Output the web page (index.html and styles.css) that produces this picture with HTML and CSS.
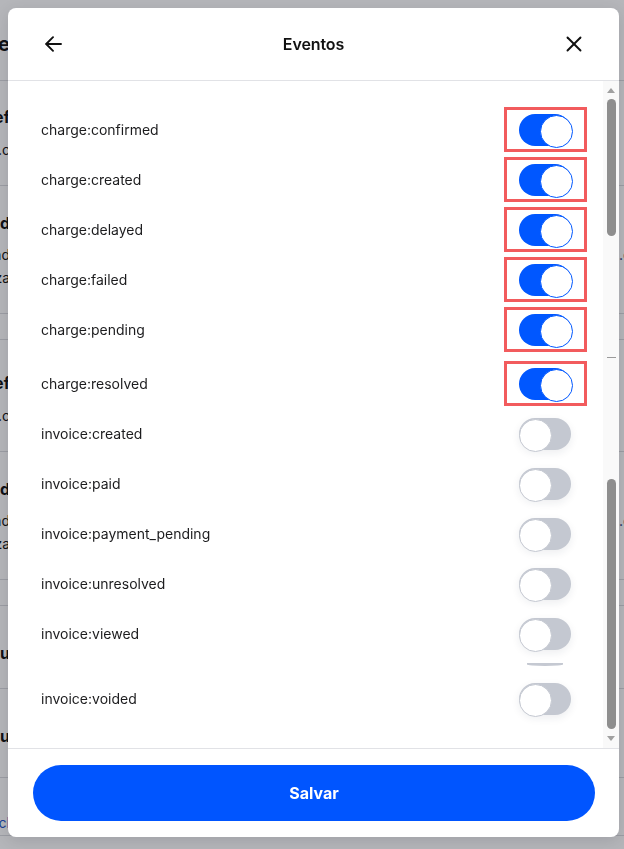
FILE: index.html
```html
<!DOCTYPE html>
<html lang="pt-BR">
<head>
    <meta charset="UTF-8">
    <meta name="viewport" content="width=device-width, initial-scale=1.0">
    <title>Eventos</title>
    <link rel="stylesheet" href="styles.css">
</head>
<body>
    <!-- page behind the dialog -->
    <div class="page">
        <div class="bg-head">
            <span class="bg-left bg-bold-lg">Configuracao ne</span>
            <span class="bg-right"></span>
        </div>
        <div class="bg-card bg-card-a">
            <div class="bg-line bg-title"><span class="bg-left">Webhook ref</span><span class="bg-right"></span></div>
            <div class="bg-line bg-text-tall"><span class="bg-left">https://api.exemplo.c</span><span class="bg-right"></span></div>
        </div>
        <div class="bg-card bg-card-b">
            <div class="bg-line bg-title"><span class="bg-left">Ativad</span><span class="bg-right"></span></div>
            <div class="bg-sub">
                <div class="bg-line"><span class="bg-left">Criad</span><span class="bg-right">.com</span></div>
                <div class="bg-line"><span class="bg-left">Atualiza</span><span class="bg-right"></span></div>
            </div>
        </div>
        <div class="bg-card bg-card-empty"></div>
        <div class="bg-card bg-card-c">
            <div class="bg-line bg-title"><span class="bg-left">Webhook ref</span><span class="bg-right"></span></div>
            <div class="bg-line bg-text-tall"><span class="bg-left">https://hooks.exemplo.c</span><span class="bg-right"></span></div>
        </div>
        <div class="bg-card bg-card-b">
            <div class="bg-line bg-title"><span class="bg-left">Ativad</span><span class="bg-right"></span></div>
            <div class="bg-sub">
                <div class="bg-line"><span class="bg-left">Criad</span><span class="bg-right">.com</span></div>
                <div class="bg-line"><span class="bg-left">Atualiza</span><span class="bg-right"></span></div>
            </div>
        </div>
        <div class="bg-card bg-card-empty"></div>
        <div class="bg-card bg-card-d">
            <div class="bg-line bg-title"><span class="bg-left">Segu</span><span class="bg-right"></span></div>
        </div>
        <div class="bg-card bg-card-e">
            <div class="bg-line bg-title"><span class="bg-left">Segu</span><span class="bg-right"></span></div>
        </div>
        <div class="bg-card bg-card-f">
            <div class="bg-line bg-link"><span class="bg-left">Excl</span><span class="bg-right"></span></div>
        </div>
    </div>

    <div class="overlay"></div>

    <div class="modal" role="dialog" aria-labelledby="modal-title">
        <header class="modal-header">
            <button class="icon-btn" aria-label="Voltar">
                <svg width="17" height="16" viewBox="0 0 17 16" fill="none" stroke="#111" stroke-width="1.9" stroke-linecap="round" stroke-linejoin="round">
                    <path d="M16 8H1.5"/>
                    <path d="M8 1.2L1.2 8 8 14.8"/>
                </svg>
            </button>
            <h2 id="modal-title">Eventos</h2>
            <button class="icon-btn" aria-label="Fechar">
                <svg width="16" height="16" viewBox="0 0 16 16" fill="none" stroke="#111" stroke-width="1.9" stroke-linecap="round">
                    <path d="M1.5 1.5l13 13"/>
                    <path d="M14.5 1.5l-13 13"/>
                </svg>
            </button>
        </header>

        <div class="modal-body">
            <ul class="event-list" id="event-list"></ul>
            <div class="fake-scrollbar" aria-hidden="true">
                <span class="sb-arrow sb-up"></span>
                <span class="sb-thumb sb-thumb-top"></span>
                <span class="sb-dash"></span>
                <span class="sb-thumb sb-thumb-bottom"></span>
                <span class="sb-arrow sb-down"></span>
            </div>
        </div>

        <footer class="modal-footer">
            <button class="save-btn">Salvar</button>
        </footer>
    </div>

    <script>
        // event toggles
        const events = [
            { name: 'charge:confirmed', on: true },
            { name: 'charge:created', on: true },
            { name: 'charge:delayed', on: true },
            { name: 'charge:failed', on: true },
            { name: 'charge:pending', on: true },
            { name: 'charge:resolved', on: true, shift: true },
            { name: 'invoice:created', on: false },
            { name: 'invoice:paid', on: false },
            { name: 'invoice:payment_pending', on: false },
            { name: 'invoice:unresolved', on: false },
            { name: 'invoice:viewed', on: false },
            { sliver: true },
            { name: 'invoice:voided', on: false }
        ];
        const list = document.getElementById('event-list');
        events.forEach(ev => {
            const li = document.createElement('li');
            if (ev.sliver) {
                li.className = 'event-gap';
                li.innerHTML = '<span class="sliver"></span>';
            } else {
                li.className = 'event-row' + (ev.shift ? ' shifted' : '');
                let sw = `<span class="switch ${ev.on ? 'is-on' : ''}" role="switch" aria-checked="${ev.on}"></span>`;
                if (ev.on) sw = `<span class="marked">${sw}</span>`;
                li.innerHTML = `<span class="event-name">${ev.name}</span>${sw}`;
            }
            list.appendChild(li);
        });
    </script>
</body>
</html>
```

FILE: styles.css
```css
* { box-sizing: border-box; }
html, body { margin: 0; padding: 0; }
body { font-family: Inter, "Noto Sans", sans-serif; color: #111; background: #fcfcfd; width: 624px; height: 849px; overflow: hidden; }

/* background page, mostly hidden by the dialog */
.page { width: 624px; }
.bg-head, .bg-line { display: flex; justify-content: space-between; white-space: nowrap; }
.bg-head { height: 81px; line-height: 88px; border-bottom: 1px solid #d8d9dd; }
.bg-left { width: 10px; overflow: hidden; direction: rtl; }
.bg-right { width: 5px; overflow: hidden; color: #1d2f6f; font-size: 14px; }
.bg-bold-lg { font-size: 20px; font-weight: 700; }
.bg-card { border-bottom: 1px solid #d8d9dd; }
.bg-title { font-size: 16px; font-weight: 700; line-height: 32px; }
.bg-line { font-size: 14px; }
.bg-title .bg-left { font-size: 16px; }
.bg-text-tall { line-height: 34px; }
.bg-sub { margin-top: 4px; line-height: 23px; }
.bg-card-a { height: 105px; padding-top: 20px; }
.bg-card-b { height: 128px; padding-top: 21px; }
.bg-card-c { height: 112px; padding-top: 27px; }
.bg-card-empty { height: 26px; }
.bg-card-d { height: 83px; padding-top: 31px; }
.bg-card-e { height: 89px; padding-top: 31px; }
.bg-card-f { padding-top: 33px; }
.bg-link { color: #2354c8; line-height: 24px; }

.overlay { position: fixed; inset: 0; background: rgba(18, 20, 32, 0.3); }

/* dialog */
.modal { position: fixed; left: 8px; top: 8px; width: 611px; height: 829px; background: #fff; border-radius: 8px; display: flex; flex-direction: column; overflow: hidden; box-shadow: 0 4px 16px rgba(0,0,0,0.12); }
.modal-header { height: 73px; flex: none; display: flex; align-items: center; justify-content: space-between; padding: 0 36px 0 36px; border-bottom: 1px solid #e1e2e6; }
.modal-header h2 { margin: 0; font-size: 16px; font-weight: 600; letter-spacing: -0.1px; }
.icon-btn { background: none; border: 0; padding: 0; width: 18px; height: 18px; display: flex; align-items: center; justify-content: center; cursor: pointer; }

.modal-body { flex: 1; display: flex; min-height: 0; }
.event-list { list-style: none; margin: 0; padding: 24px 32px 0 33px; flex: 1; }
.event-row { height: 50px; display: flex; align-items: center; justify-content: space-between; }
.event-row.shifted { margin-top: 4px; }
.event-name { font-size: 14px; color: #1c1c1e; padding-bottom: 2px; }
.event-gap { height: 15px; display: flex; justify-content: flex-end; }
.sliver { width: 36px; height: 3px; margin: 4px 8px 0 0; background: #c5c9d2; border-radius: 0 0 50% 50%; }

.switch { width: 52px; height: 32px; border-radius: 16px; background: #c4c8d1; position: relative; display: block; box-shadow: 0 3px 8px rgba(30, 40, 70, 0.08); }
.switch::after { content: ""; position: absolute; top: 0.5px; left: 0; width: 31px; height: 31px; border-radius: 50%; background: #fff; border: 1px solid #c4c8d1; }
.switch.is-on { background: #0057ff; box-shadow: none; }
.switch.is-on::after { left: 21px; border-color: #0057ff; }
.marked { display: block; border: 3px solid #f25b5d; padding: 4px 13px 3px 12px; margin: -7px -16px -6px -15px; }

.fake-scrollbar { width: 16px; flex: none; background: #f9f9f9; display: flex; flex-direction: column; align-items: center; }
.sb-arrow { width: 0; height: 0; border-left: 4.5px solid transparent; border-right: 4.5px solid transparent; }
.sb-up { margin-top: 7px; border-bottom: 5px solid #a0a0a0; }
.sb-down { margin-top: 7px; border-top: 5px solid #a0a0a0; }
.sb-thumb { width: 9px; background: #8e8e8e; border-radius: 5px; }
.sb-thumb-top { margin-top: 6px; height: 137px; }
.sb-dash { width: 9px; height: 1px; margin-top: 121px; background: #9a9a9a; }
.sb-thumb-bottom { margin-top: 121px; height: 250px; }

.modal-footer { height: 89px; flex: none; border-top: 1px solid #e1e2e6; padding: 16px 24px 0 25px; }
.save-btn { width: 100%; height: 56px; border: 0; border-radius: 28px; background: #0055ff; color: #fff; font-family: Inter, "Noto Sans", sans-serif; font-size: 16px; font-weight: 700; cursor: pointer; }
```
